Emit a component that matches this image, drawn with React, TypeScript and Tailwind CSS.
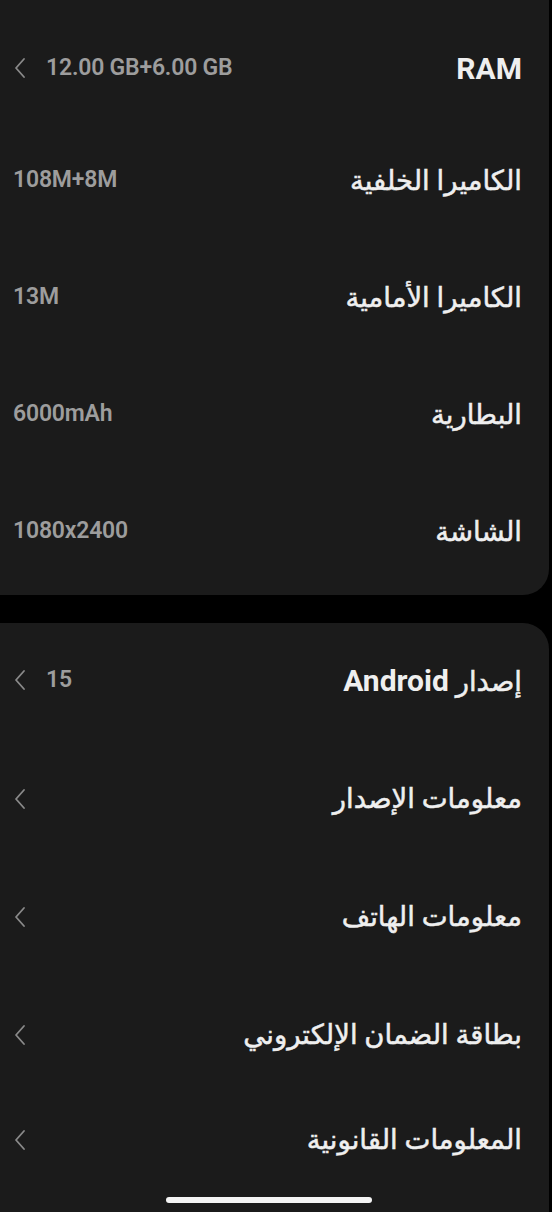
import React from "react";

const Chevron = () => (
  <svg width="14" height="22" viewBox="0 0 14 22" fill="none" className="shrink-0">
    <path d="M11 2 L3 11 L11 20" stroke="#8a8a8a" strokeWidth="1.8" strokeLinecap="round" strokeLinejoin="round" />
  </svg>
);

type RowProps = { title: React.ReactNode; value?: string; chevron?: boolean; h: string };

const Row = ({ title, value, chevron, h }: RowProps) => (
  <div className={`flex items-center justify-between pl-[13px] pr-[27px] ${h}`} dir="ltr">
    <div className="flex items-center gap-[19px]">
      {chevron && <Chevron />}
      {value && (
        <span className="text-[23px] font-semibold text-[#9d9d9d] tracking-[-0.2px]" style={{ fontFamily: "Roboto, 'Liberation Sans', sans-serif" }}>
          {value}
        </span>
      )}
    </div>
    <span
      dir="rtl"
      className="text-[27.5px] font-normal text-[#efefef] [-webkit-text-stroke:0.5px_#efefef]"
      style={{ fontFamily: "Roboto, 'DejaVu Sans', 'Noto Sans', sans-serif" }}
    >
      {title}
    </span>
  </div>
);

export default function App() {
  return (
    <div className="w-[552px] h-[1212px] bg-black overflow-hidden flex flex-col">
      <div className="w-[549px] bg-[#1b1b1b] rounded-br-[26px] pt-[14px] pb-[5px]">
        <Row h="h-[108px]" chevron value="12.00 GB+6.00 GB" title={<span className="text-[30px] font-bold [-webkit-text-stroke:0px]">RAM</span>} />
        <Row h="h-[117px]" value="108M+8M" title="الكاميرا الخلفية" />
        <Row h="h-[117px]" value="13M" title="الكاميرا الأمامية" />
        <Row h="h-[117px]" value="6000mAh" title="البطارية" />
        <Row h="h-[117px]" value="1080x2400" title="الشاشة" />
      </div>
      <div className="mt-[28px] w-[549px] flex-1 bg-[#1b1b1b] rounded-tr-[26px]">
        <Row
          h="h-[114px]"
          chevron
          value="15"
          title={
            <>
              إصدار <span className="text-[30px] font-bold [-webkit-text-stroke:0px]">Android</span>
            </>
          }
        />
        <Row h="h-[124px]" chevron title="معلومات الإصدار" />
        <Row h="h-[112px]" chevron title="معلومات الهاتف" />
        <Row h="h-[124px]" chevron title="بطاقة الضمان الإلكتروني" />
        <Row h="h-[86px]" chevron title="المعلومات القانونية" />
        <div className="pl-[166px] pt-[14px]">
          <div className="w-[206px] h-[6px] rounded-full bg-[#f4f4f4]" />
        </div>
      </div>
    </div>
  );
}
